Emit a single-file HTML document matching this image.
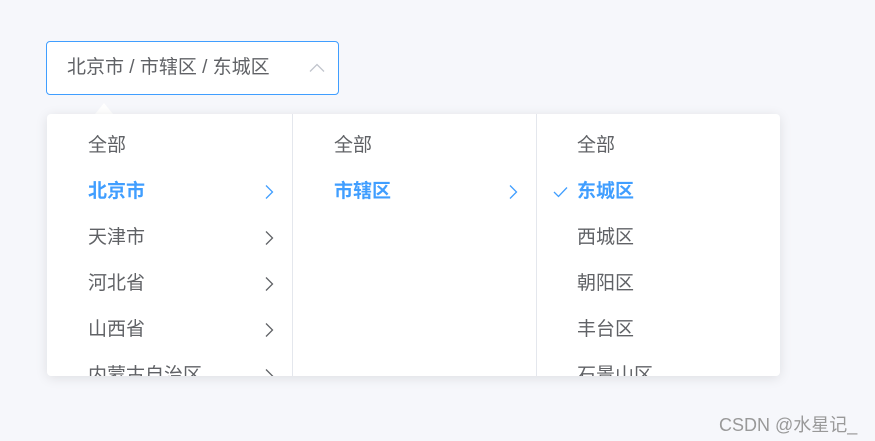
<!DOCTYPE html>
<html><head><meta charset="utf-8"><style>
*{margin:0;padding:0;box-sizing:border-box}
body{width:875px;height:441px;background:#f6f7fb;font-family:"Liberation Sans","Noto Sans CJK SC",sans-serif;position:relative;overflow:hidden;color:#606266}
.input{position:absolute;left:46px;top:41px;width:293px;height:54px;border:1px solid #409eff;border-radius:4px;background:#fff;font-size:19px;line-height:52px;padding-left:20px;color:#606266}
.input svg{position:absolute;left:262px;top:21px}
.caret{position:absolute;left:95px;top:103px;width:0;height:0;border-left:9px solid transparent;border-right:9px solid transparent;border-bottom:11px solid #fff}
.pop{position:absolute;left:47px;top:114px;width:733px;height:262px;background:#fff;border-radius:4px;box-shadow:0 2px 12px rgba(0,0,0,.1);overflow:hidden;display:flex}
.col{position:relative;height:100%;border-right:1px solid #e4e7ed}
.col:last-child{border-right:none}
.item{position:absolute;height:46px;line-height:50px;font-size:19px;white-space:nowrap;color:#606266;width:100%}
.act{color:#409eff;font-weight:bold}
.arr{position:absolute;top:17px}
</style></head><body>
<div class="input">北京市 / 市辖区 / 东城区
<svg width="16" height="10" viewBox="0 0 16 10"><path d="M1 8.5L8 1.5L15 8.5" fill="none" stroke="#c0c4cc" stroke-width="1.3"/></svg></div>
<div class="caret"></div>
<div class="pop">
<div class="col" style="width:246px">
<div class="item" style="top:7px;padding-left:41px">全部</div>
<div class="item act" style="top:53px;padding-left:41px">北京市<svg class="arr" style="left:217px" width="10" height="16" viewBox="0 0 10 16"><path d="M2 1.5L8.5 8L2 14.5" fill="none" stroke="#409eff" stroke-width="1.3"/></svg></div>
<div class="item" style="top:99px;padding-left:41px">天津市<svg class="arr" style="left:217px" width="10" height="16" viewBox="0 0 10 16"><path d="M2 1.5L8.5 8L2 14.5" fill="none" stroke="#606266" stroke-width="1.3"/></svg></div>
<div class="item" style="top:145px;padding-left:41px">河北省<svg class="arr" style="left:217px" width="10" height="16" viewBox="0 0 10 16"><path d="M2 1.5L8.5 8L2 14.5" fill="none" stroke="#606266" stroke-width="1.3"/></svg></div>
<div class="item" style="top:191px;padding-left:41px">山西省<svg class="arr" style="left:217px" width="10" height="16" viewBox="0 0 10 16"><path d="M2 1.5L8.5 8L2 14.5" fill="none" stroke="#606266" stroke-width="1.3"/></svg></div>
<div class="item" style="top:237px;padding-left:41px">内蒙古自治区<svg class="arr" style="left:217px" width="10" height="16" viewBox="0 0 10 16"><path d="M2 1.5L8.5 8L2 14.5" fill="none" stroke="#606266" stroke-width="1.3"/></svg></div>
</div>
<div class="col" style="width:244px">
<div class="item" style="top:7px;padding-left:41px">全部</div>
<div class="item act" style="top:53px;padding-left:41px">市辖区<svg class="arr" style="left:215px" width="10" height="16" viewBox="0 0 10 16"><path d="M2 1.5L8.5 8L2 14.5" fill="none" stroke="#409eff" stroke-width="1.3"/></svg></div>
</div>
<div class="col" style="width:243px">
<div class="item" style="top:7px;padding-left:40px">全部</div>
<div class="item act" style="top:53px;padding-left:40px"><svg style="position:absolute;left:16px;top:19px" width="15" height="12" viewBox="0 0 15 12"><path d="M1 6L5.5 10.5L14 1.5" fill="none" stroke="#409eff" stroke-width="1.3"/></svg>东城区</div>
<div class="item" style="top:99px;padding-left:40px">西城区</div>
<div class="item" style="top:145px;padding-left:40px">朝阳区</div>
<div class="item" style="top:191px;padding-left:40px">丰台区</div>
<div class="item" style="top:237px;padding-left:40px">石景山区</div>
</div>
</div>
<div style="position:absolute;left:719px;top:411px;font-size:18px;color:#999;white-space:nowrap">CSDN @水星记_</div>
</body></html>
